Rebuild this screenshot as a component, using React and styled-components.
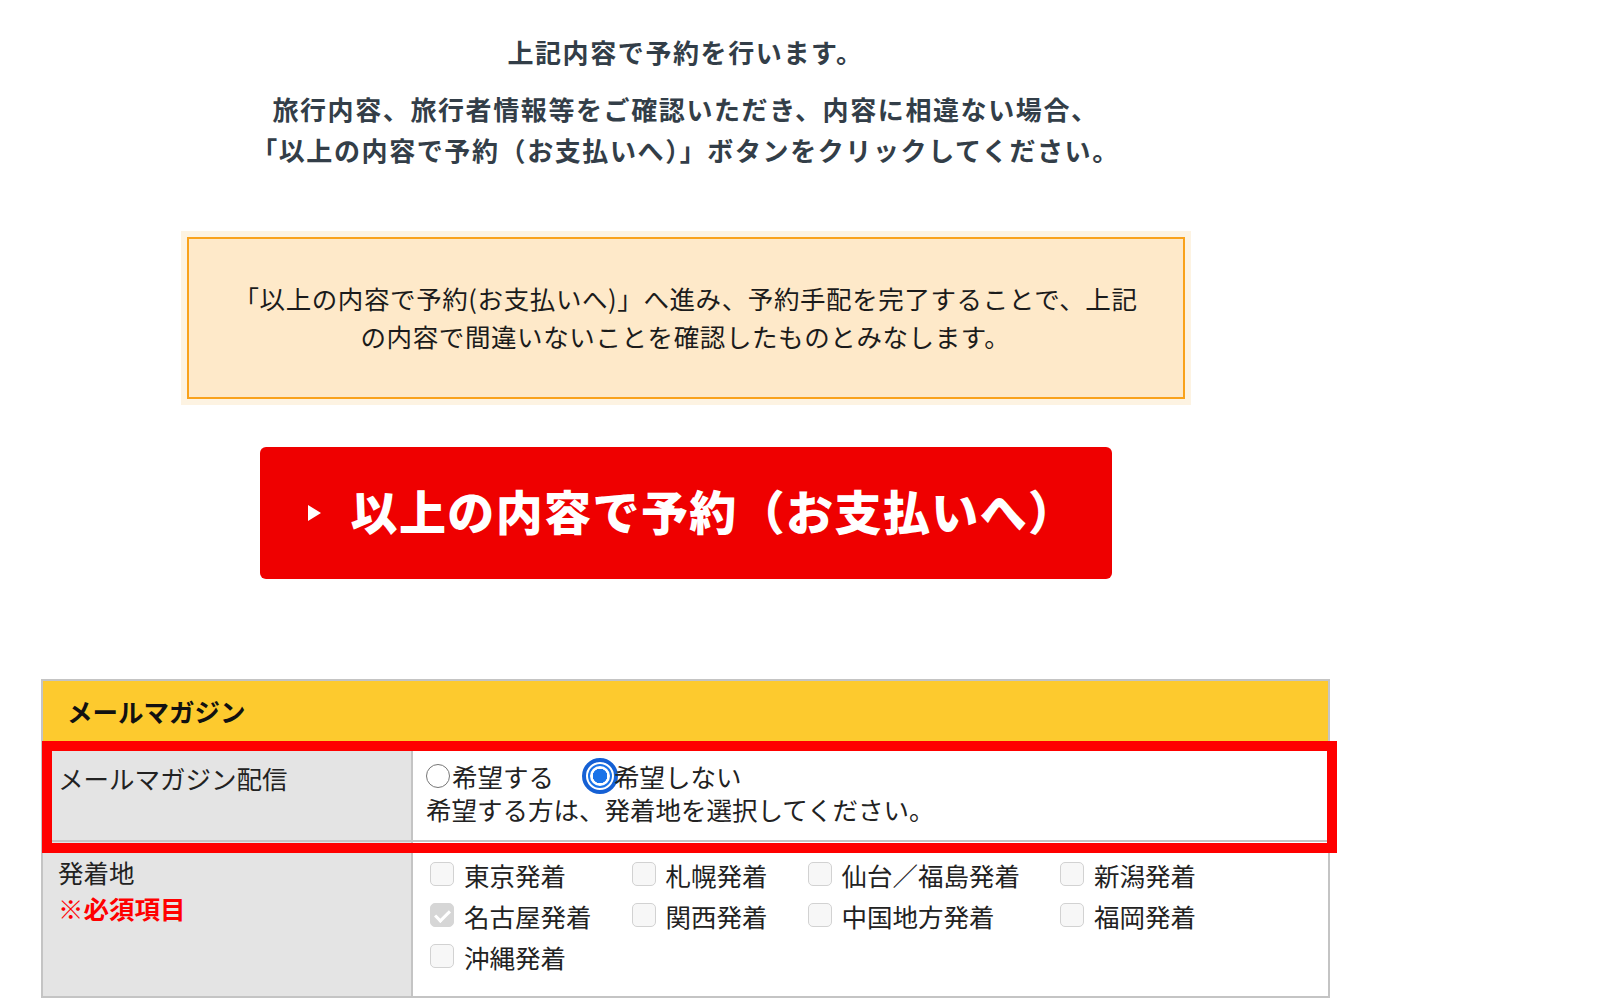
import React from 'react';
import styled, { createGlobalStyle, css } from 'styled-components';

const GlobalStyle = createGlobalStyle`
  body {
    margin: 0;
    background: #fff;
    font-family: "Noto Sans CJK JP", "Noto Sans", sans-serif;
  }
`

const Page = styled.div`
  width: 1289px;
  margin-left: 41px;
  padding-top: 32px;
  padding-bottom: 40px;
`

const Title = styled.h2`
  margin: 0;
  text-align: center;
  font-size: 26px;
  font-weight: 700;
  letter-spacing: 1.6px;
  line-height: 40px;
  color: #333e48;
`

const Lead = styled.p`
  margin: 16px 0 0;
  text-align: center;
  font-size: 26px;
  font-weight: 700;
  letter-spacing: 1.6px;
  line-height: 41px;
  color: #333e48;
`

const NoticeOuter = styled.div`
  // 外側の淡いふち
  width: 1010px;
  box-sizing: border-box;
  margin: 61px auto 0;
  padding: 6px;
  background: #fdf3e2;
`

const Notice = styled.div`
  border: 2px solid #f9a21c;
  background: #fee9c9;
  padding: 40px 0 42px;
  text-align: center;
  font-size: 25.5px;
  letter-spacing: 0.6px;
  line-height: 38px;
  color: #1b1b1b;
`

const BookButton = styled.button`
  display: flex;
  align-items: center;
  width: 852px;
  height: 132px;
  margin: 42px auto 0;
  padding: 0 0 8px 48px;
  box-sizing: border-box;
  border: none;
  border-radius: 6px;
  background: #ef0000;
  color: #fff;
  font-family: inherit;
  font-size: 47px;
  font-weight: 900;
  letter-spacing: 1.4px;
  cursor: pointer;
`

const Arrow = styled.span`
  // 白い三角
  width: 0;
  height: 0;
  margin: 8px 30px 0 0;
  border-top: 8.5px solid transparent;
  border-bottom: 8.5px solid transparent;
  border-left: 13px solid #fff;
`

const Table = styled.div`
  position: relative;
  margin-top: 100px;
  border: 2px solid #c4c4c4;
`

const Head = styled.div`
  height: 60px;
  padding-left: 24px;
  background: #fdca2e;
  font-size: 25.5px;
  font-weight: 700;
  line-height: 60px;
  color: #111;
`

const Row = styled.div`
  display: grid;
  grid-template-columns: 370px 1fr;
  ${props =>
    props.divider &&
    css`
      border-bottom: 2px solid #c4c4c4;
    `}
`

const Label = styled.div`
  padding: ${props => props.top}px 0 0 15px;
  background: #e4e4e4;
  border-right: 2px solid #c4c4c4;
  font-size: 25.5px;
  line-height: 36px;
  color: #222;
`

const Required = styled.div`
  color: #ff0000;
  font-weight: 700;
`

const Value = styled.div`
  padding: ${props => props.pad};
  font-size: 25.5px;
  line-height: 33px;
  color: #222;
`

const RadioLine = styled.div`
  display: flex;
  align-items: center;
`

const Radio = styled.input.attrs({ type: 'radio' })`
  appearance: none;
  flex-shrink: 0;
  width: 24px;
  height: 24px;
  margin: 0 ${props => props.gap}px 0 ${props => props.lead}px;
  box-sizing: border-box;
  border: 1.5px solid #767676;
  border-radius: 50%;
  background: #fff;

  &:checked {
    border: 2px solid #1a73e8;
    background: radial-gradient(circle, #1a73e8 0 7px, #fff 7.5px);
  }

  // フォーカス時の青い輪
  ${props =>
    props.focused &&
    css`
      outline: 4px solid #1560d4;
      outline-offset: 2.5px;
    `}
`

const Grid = styled.div`
  display: grid;
  grid-template-columns: repeat(4, auto);
  justify-content: start;
  column-gap: 40px;
`

const Item = styled.label`
  display: flex;
  align-items: center;
  height: 41px;
`

const Box = styled.input.attrs({ type: 'checkbox' })`
  appearance: none;
  position: relative;
  flex-shrink: 0;
  width: 24px;
  height: 24px;
  margin: 0 10px 0 0;
  box-sizing: border-box;
  border: 1px solid #d2d2d2;
  border-radius: 5px;
  background: #f7f7f7;

  &:checked {
    border-color: #d6d6d6;
    background: #d6d6d6;
  }
  &:checked::after {
    content: '';
    position: absolute;
    left: 7px;
    top: 2.5px;
    width: 6px;
    height: 12px;
    border: solid #fff;
    border-width: 0 3px 3px 0;
    transform: rotate(45deg);
  }
`

const Highlight = styled.div`
  // 赤い注目枠
  position: absolute;
  left: -1px;
  top: 60px;
  width: 1295px;
  height: 112px;
  box-sizing: border-box;
  border: 10px solid #ff0000;
  pointer-events: none;
`

const areas = [
  { name: '東京発着' },
  { name: '札幌発着' },
  { name: '仙台／福島発着' },
  { name: '新潟発着' },
  { name: '名古屋発着', checked: true },
  { name: '関西発着' },
  { name: '中国地方発着' },
  { name: '福岡発着' },
  { name: '沖縄発着' },
]

function App() {
  return (
    <>
      <GlobalStyle />
      <Page>
        <Title>上記内容で予約を行います。</Title>
        <Lead>
          旅行内容、旅行者情報等をご確認いただき、内容に相違ない場合、<br />
          「以上の内容で予約（お支払いへ）」ボタンをクリックしてください。
        </Lead>

        <NoticeOuter>
          <Notice>
            「以上の内容で予約(お支払いへ)」へ進み、予約手配を完了することで、上記<br />
            の内容で間違いないことを確認したものとみなします。
          </Notice>
        </NoticeOuter>

        <BookButton>
          <Arrow />
          以上の内容で予約（お支払いへ）
        </BookButton>

        <Table>
          <Head>メールマガジン</Head>
          <Row divider>
            <Label top={19}>メールマガジン配信</Label>
            <Value pad="18px 0 15px 13px">
              <RadioLine>
                <Radio name="mail" lead={0} gap={2} />
                希望する
                <Radio name="mail" lead={34} gap={2} focused defaultChecked />
                希望しない
              </RadioLine>
              <div>希望する方は、発着地を選択してください。</div>
            </Value>
          </Row>
          <Row>
            <Label top={12}>
              発着地
              <Required>※必須項目</Required>
            </Label>
            <Value pad="11.5px 0 19.5px 17px">
              <Grid>
                {areas.map(a => (
                  <Item key={a.name}>
                    <Box defaultChecked={a.checked} disabled={a.checked} />
                    {a.name}
                  </Item>
                ))}
              </Grid>
            </Value>
          </Row>
          <Highlight />
        </Table>
      </Page>
    </>
  )
}

export default App;
